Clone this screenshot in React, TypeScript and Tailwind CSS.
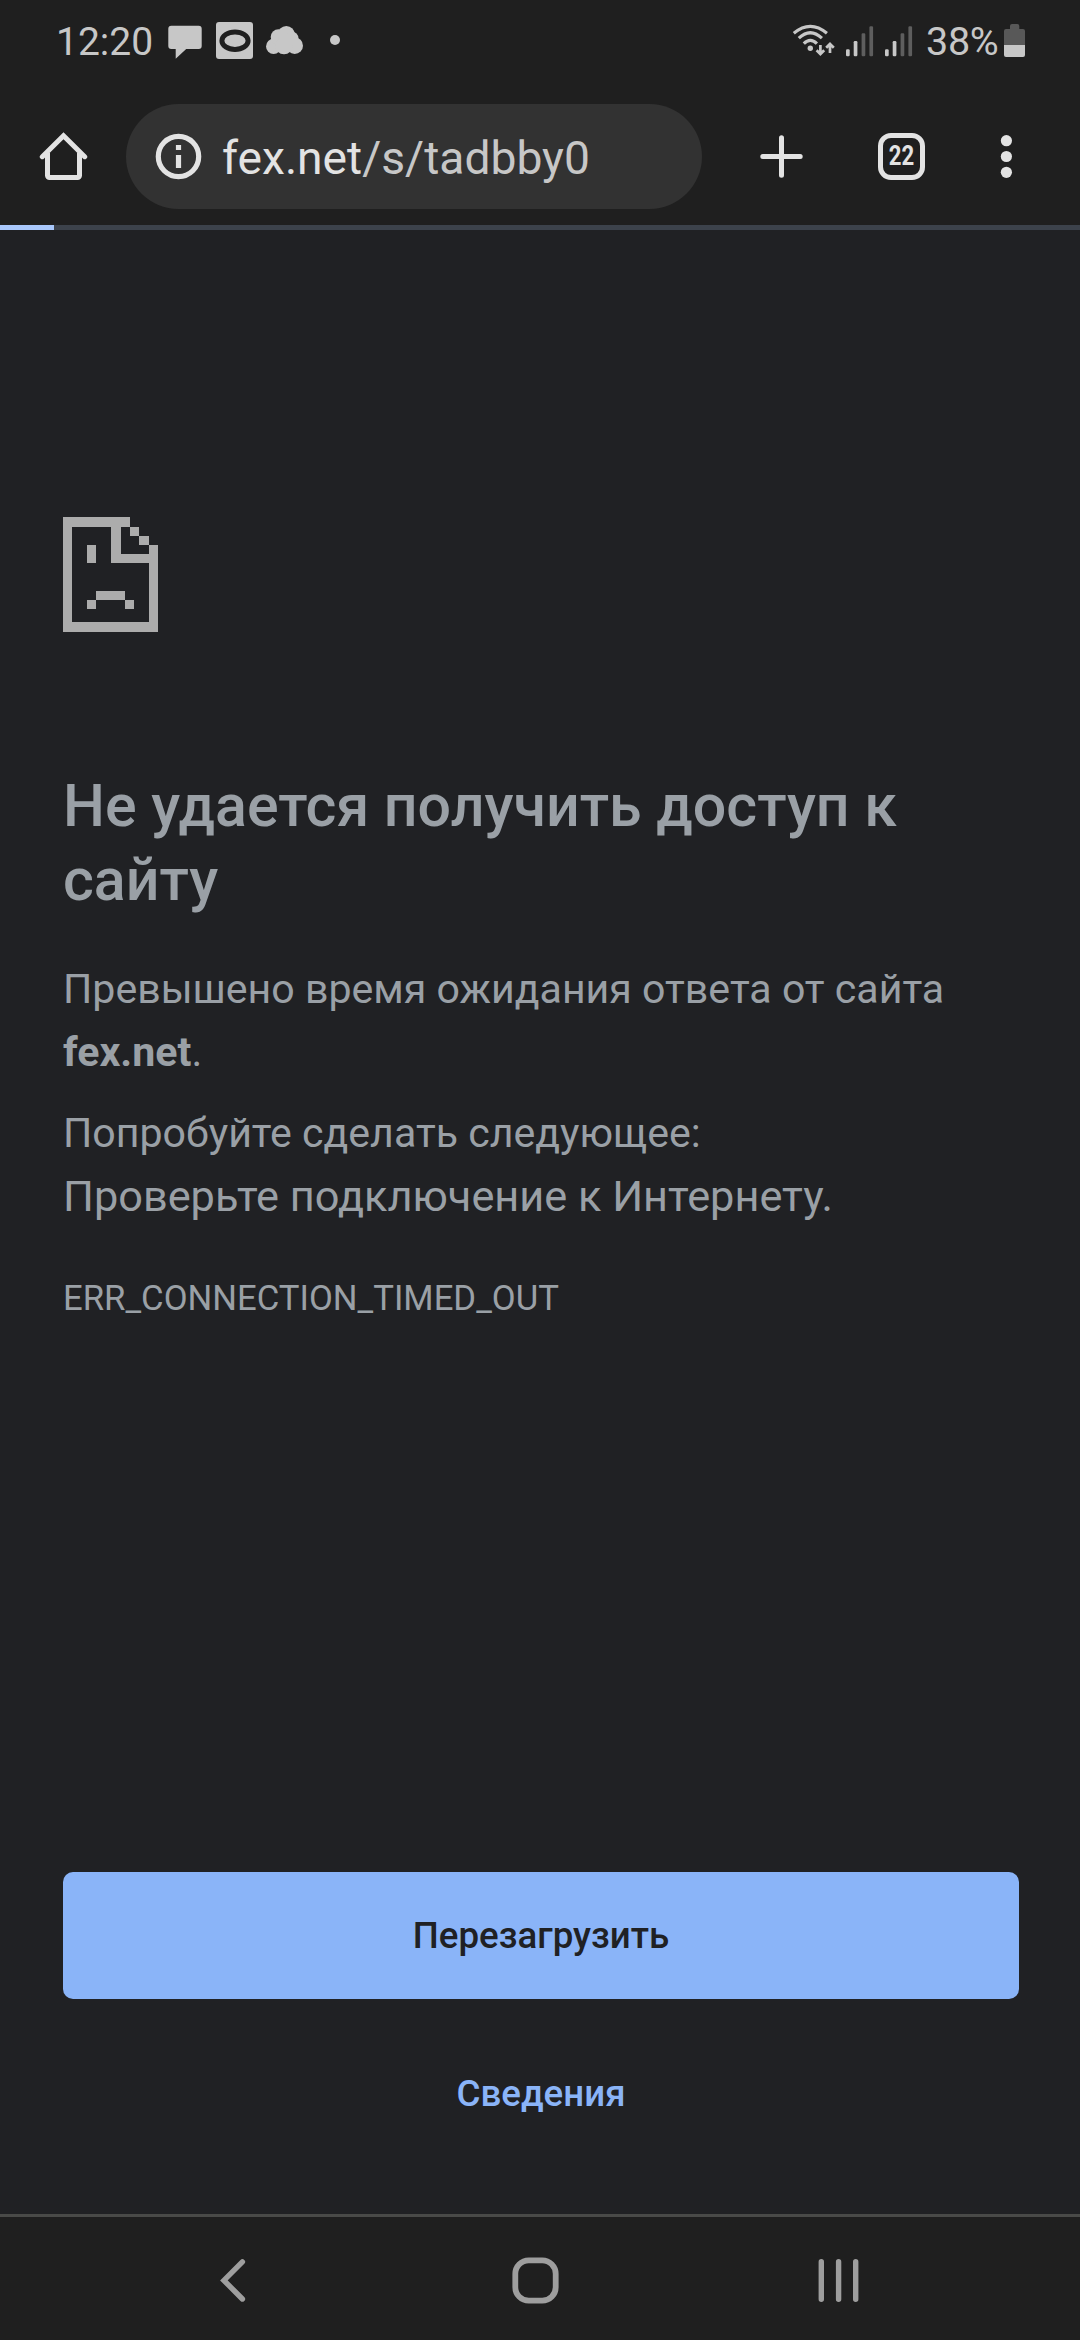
import type { ReactNode } from "react"

type GlyphProps = {
  box: string
  className: string
  children: ReactNode
}

function Glyph({ box, className, children }: GlyphProps) {
  return (
    <svg viewBox={box} className={`shrink-0 ${className}`} fill="none" aria-hidden="true">
      {children}
    </svg>
  )
}

function SignalBars({ className }: { className: string }) {
  return (
    <Glyph box="0 0 28 84" className={`h-[84px] w-[28px] ${className}`}>
      <rect x="0" y="49.3" width="3.7" height="6.9" rx="1.2" fill="#c7c7c7" />
      <rect x="7.7" y="41" width="3.7" height="15.2" rx="1.2" fill="#c7c7c7" />
      <rect x="15.6" y="33.2" width="3.7" height="23" rx="1.2" fill="#5e5e5e" />
      <rect x="23.4" y="26.2" width="3.7" height="30" rx="1.2" fill="#5e5e5e" />
    </Glyph>
  )
}

function StatusBar() {
  return (
    <div className="flex h-[88px] items-start justify-between pr-[55px] pl-[56px] text-[#c7c7c7]">
      <div className="flex">
        <span className="w-[112px] text-[39px] leading-[84px] whitespace-nowrap">12:20</span>
        <Glyph box="168 0 34 84" className="h-[84px] w-[34px]">
          <path
            d="M171.3 25.7H198.7a3 3 0 0 1 3 3V45.9a3 3 0 0 1-3 3H186.2L175.7 58.7V48.9H171.3a3 3 0 0 1-3-3V28.7a3 3 0 0 1 3-3Z"
            fill="currentColor"
          />
        </Glyph>
        <Glyph box="216 0 37 84" className="ml-[14px] h-[84px] w-[37px]">
          <rect x="216" y="22" width="37" height="37" rx="3" fill="currentColor" />
          <ellipse cx="235" cy="40.7" rx="13.1" ry="8.8" stroke="#1f1f1f" strokeWidth="5" />
        </Glyph>
        <Glyph box="266 0 37 84" className="ml-[13px] h-[84px] w-[37px]">
          <g fill="currentColor">
            <circle cx="273.6" cy="46.4" r="7.6" />
            <circle cx="278.5" cy="37" r="7.8" />
            <circle cx="286.3" cy="34.5" r="8.6" />
            <circle cx="291.5" cy="38.5" r="7" />
            <circle cx="294.7" cy="45.7" r="8.3" />
            <circle cx="284" cy="45.5" r="8.7" />
          </g>
        </Glyph>
        <Glyph box="330 0 10 84" className="ml-[27px] h-[84px] w-[10px]">
          <circle cx="335" cy="40" r="5" fill="currentColor" />
        </Glyph>
      </div>

      <div className="flex">
        <Glyph box="792 0 43 84" className="h-[84px] w-[43px]">
          <g stroke="currentColor" strokeWidth="3.2">
            <path d="M793.8 33.2Q810.3 19.4 826.9 33.2" />
            <path d="M798.8 38.2Q810.3 27.2 821.9 38.2" />
            <path d="M803.8 43.6Q810.3 37.2 816.9 43.6" />
          </g>
          <circle cx="810.3" cy="48.3" r="2.7" fill="currentColor" />
          <g stroke="currentColor" strokeWidth="2.7">
            <path d="M820.4 45V54M816.6 50.2L820.4 54L824.2 50.2" />
            <path d="M830 53V44M826.2 47.8L830 44L833.8 47.8" />
          </g>
        </Glyph>
        <SignalBars className="ml-[11px]" />
        <SignalBars className="ml-[11px]" />
        <span className="ml-[13px] w-[78px] text-[39.5px] leading-[84px] tracking-[-0.3px] whitespace-nowrap">
          38%
        </span>
        <Glyph box="1004 0 21 84" className="h-[84px] w-[21px]">
          <path d="M1010 29V26a2 2 0 0 1 2-2h5.3a2 2 0 0 1 2 2v3h3.7a2 2 0 0 1 2 2V45h-21V31a2 2 0 0 1 2-2Z" fill="#585858" />
          <path d="M1004 45h21v10a2 2 0 0 1-2 2h-17a2 2 0 0 1-2-2Z" fill="currentColor" />
        </Glyph>
      </div>
    </div>
  )
}

function Toolbar() {
  return (
    <div className="flex h-[137px] items-center pl-[39px] text-[#e3e3e3]">
      <Glyph box="39 132 49 49" className="h-[49px] w-[49px]">
        <path
          d="M47.5 153V175.5a2 2 0 0 0 2 2H77.5a2 2 0 0 0 2-2V153"
          stroke="currentColor"
          strokeWidth="5"
        />
        <path
          d="M42.3 156.7L63.5 135.8L84.7 156.7"
          stroke="currentColor"
          strokeWidth="5"
          strokeLinecap="round"
        />
      </Glyph>

      <div className="ml-[38px] flex h-[105px] w-[576px] items-center rounded-full bg-[#323232] pl-[29px]">
        <Glyph box="155 133 47 47" className="h-[47px] w-[47px]">
          <circle cx="178.5" cy="156.5" r="20.2" stroke="currentColor" strokeWidth="5.2" />
          <path d="M178.5 145V150M178.5 155V168" stroke="currentColor" strokeWidth="5.2" />
        </Glyph>
        <span className="mt-[3px] ml-5 text-[46.2px] leading-[56px] whitespace-nowrap">
          fex.net<span className="text-[#c7c7c7]">/s/tadbby0</span>
        </span>
      </div>

      <Glyph box="760 135 43 43" className="ml-[58px] h-[43px] w-[43px]">
        <path
          d="M781.5 137.8V175.2M762.8 156.5H800.2"
          stroke="currentColor"
          strokeWidth="5"
          strokeLinecap="round"
        />
      </Glyph>

      <div className="ml-[75px] flex size-[47px] items-center justify-center rounded-[13px] border-[5px] border-[#e3e3e3]">
        <span className="scale-x-[0.82] text-[27px] leading-none font-bold">22</span>
      </div>

      <Glyph box="1000 134 13 45" className="ml-[75px] h-[45px] w-[13px]">
        <g fill="currentColor">
          <circle cx="1006.4" cy="140.7" r="5.6" />
          <circle cx="1006.4" cy="156.5" r="5.6" />
          <circle cx="1006.4" cy="172.3" r="5.6" />
        </g>
      </Glyph>
    </div>
  )
}

function SadPage() {
  return (
    <Glyph box="0 0 95 115" className="h-[115px] w-[95px]">
      <g fill="#acacac" shapeRendering="crispEdges">
        <path d="M0 0H67V10H58V37H86V28H95V115H0ZM9 10V105H86V46H48V10Z" fillRule="evenodd" />
        <rect x="67" y="10" width="9" height="9" />
        <rect x="76" y="19" width="10" height="9" />
        <rect x="24" y="28" width="9" height="18" />
        <rect x="33" y="74" width="29" height="9" />
        <rect x="24" y="83" width="9" height="9" />
        <rect x="62" y="83" width="9" height="9" />
      </g>
    </Glyph>
  )
}

function ErrorPage() {
  return (
    <main className="flex flex-1 flex-col bg-[#202124] px-[63px] pt-[287px] text-[#9aa0a6]">
      <SadPage />
      <h1 className="mt-[137px] text-[59.1px] leading-[74px] font-medium whitespace-nowrap">
        Не удается получить доступ к<br />
        сайту
      </h1>
      <p className="mt-[41px] text-[41.1px] leading-[63px] whitespace-nowrap">
        Превышено время ожидания ответа от сайта
        <br />
        <strong className="font-bold">fex.net</strong>.
      </p>
      <p className="mt-[18px] text-[41.1px] leading-[63px] whitespace-nowrap">Попробуйте сделать следующее:</p>
      <p className="text-[43.3px] leading-[63px] whitespace-nowrap">Проверьте подключение к Интернету.</p>
      <p className="mt-[39px] text-[34.7px] leading-[63px]">ERR_CONNECTION_TIMED_OUT</p>

      <div className="mt-auto mb-[88px] flex w-[956px] flex-col">
        <button className="h-[127px] rounded-[10px] bg-[#8ab4f8] text-[36.7px] font-medium text-[#202124]">
          Перезагрузить
        </button>
        <button className="mt-[62px] h-[65px] text-[36.7px] leading-[65px] font-medium text-[#8ab4f8]">
          Сведения
        </button>
      </div>
    </main>
  )
}

function NavBar() {
  return (
    <nav className="flex h-[126px] items-center border-t-[3px] border-[#494a48] pl-[218px] text-[#9e9e9e]">
      <Glyph box="218 2217 30 123" className="h-[123px] w-[30px]">
        <path
          d="M242.4 2261.8L223.9 2280.4L242.4 2299"
          stroke="currentColor"
          strokeWidth="5.4"
          strokeLinecap="round"
        />
      </Glyph>
      <Glyph box="510 2217 51 123" className="ml-[262px] h-[123px] w-[51px]">
        <rect x="515.3" y="2260.3" width="40.4" height="40.4" rx="13.5" stroke="currentColor" strokeWidth="5.8" />
      </Glyph>
      <Glyph box="818 2217 42 123" className="ml-[257px] h-[123px] w-[42px]">
        <path
          d="M821.3 2261.8V2299.2M838.6 2261.8V2299.2M855.7 2261.8V2299.2"
          stroke="currentColor"
          strokeWidth="5.4"
          strokeLinecap="round"
        />
      </Glyph>
    </nav>
  )
}

export default function App() {
  return (
    <div className="flex h-[2340px] w-[1080px] flex-col overflow-hidden bg-[#1f1f1f] font-['Roboto',sans-serif]">
      <header>
        <StatusBar />
        <Toolbar />
        <div className="h-[5px] bg-[#3c424b]">
          <div className="h-full w-[54px] bg-[#a8c7fa]" />
        </div>
      </header>
      <ErrorPage />
      <NavBar />
    </div>
  )
}
